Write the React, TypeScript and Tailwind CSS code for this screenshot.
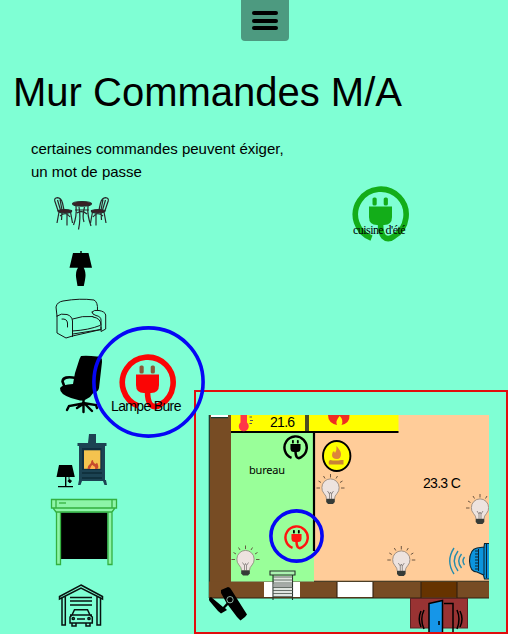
import React from "react";

const sans = "font-['Liberation_Sans',Arial,sans-serif]";

function Plug({ color, prong, className }: { color: string; prong: string; className: string }) {
  return (
    <svg viewBox="0 0 57 57" className={className} fill="none">
      <path d="M19.5 52.2A25.4 25.4 0 1 1 42 50.2Q36 55 31.5 50.5Q28.5 47 28.5 37" stroke={color} strokeWidth="5.6" />
      <path d="M17 20.5H40V31Q40 39 32 39H25Q17 39 17 31Z" fill={color} />
      <rect x="20.5" y="11.5" width="4.2" height="8" rx="1.6" fill={prong} />
      <rect x="31.7" y="11.5" width="4.2" height="8" rx="1.6" fill={prong} />
    </svg>
  );
}

function CafeChair() {
  return (
    <>
      <path d="M58.5 212L54.8 201Q54 198 57.5 197.7Q61 198 62.5 203L64 210M57.5 200L60.5 210M60 199.5L62 210" />
      <path d="M58 210.5Q65 208.5 71.5 210.5Q72.5 213 65 213Q58 213 58 210.5Z" fill="#3a1f25" />
      <path d="M59 212L57 223M62 213L61.5 220M67 213V225.5M70.5 212L72.5 223M60 216Q66 211 70 217" />
    </>
  );
}

function Dining() {
  return (
    <svg viewBox="40 185 80 60" className="h-[60px] w-[80px]" fill="none" stroke="#28282a" strokeWidth="1.2">
      <CafeChair />
      <g transform="translate(163 0) scale(-1 1)">
        <CafeChair />
      </g>
      <ellipse cx="82" cy="203.8" rx="9.5" ry="2.3" fill="#3a1f25" />
      <path d="M76 206Q77 216 73.5 225M79 207Q81 218 78.5 229.5M84.5 207Q82 217 84 222M88 206Q87 215 91 226M75 210H89M77 213Q82 210 87 214" />
    </svg>
  );
}

function TableLamp() {
  return (
    <svg viewBox="40 245 80 48" className="h-[48px] w-[80px]">
      <path d="M80.3 251H81.7V253H88.5L92 267.7H83.7L84.7 270Q86.200 274 85 280L83.8 286H77.5L76.5 280Q75.200 274 76.800 270L78 267.700H69.500L73 253H80.300Z" />
    </svg>
  );
}

function Sofa() {
  return (
    <svg viewBox="40 293 80 54" className="h-[54px] w-[80px]" fill="none" stroke="#151515" strokeWidth="1" strokeLinecap="round">
      <path d="M57 316L56 307Q57 302 63 301Q80 298 94 300Q98 302 97.5 310M57 316Q61 313 67 314.5Q72 316 72.5 321V336.5M57 316V333L66 338L72.5 336L101 329.5V327M72.5 319Q82 315.5 93 316.5M92 312Q94 309.5 99 310.5Q105 311.5 105.7 315V329L101 331.5V320Q101 316.5 96 315.5Q92 314.5 92 312M72.5 331Q89 330 100 325.5M93 317Q101 318 101 325M62 319Q67 318.5 67.5 323V327M73 334L101 329.5" />
    </svg>
  );
}

function OfficeChair() {
  return (
    <svg viewBox="40 347 80 75" className="h-[75px] w-[80px]">
      <path d="M81 356Q88 355.500 97 356.500Q102.500 356 102 362L99 388Q98 392.500 94 392L90 397L84 400.500H80L71 398Q59.500 394 60 388Q62 384.500 73 384L75 373L79.500 359Z" />
      <path d="M76 378Q63 375.500 62.500 381.500L65 388" fill="none" stroke="#000" strokeWidth="2.6" />
      <path d="M83.500 398V412M83 403.500L69 406L67 410M83 404L77 408M83 403L96 405L97 408M84 403L92 411" fill="none" stroke="#000" strokeWidth="2.4" strokeLinecap="round" />
    </svg>
  );
}

function Stove() {
  return (
    <svg viewBox="40 422 80 69" className="h-[69px] w-[80px]">
      <path d="M59 465H72L74.8 477H56.5ZM65 477H66.4V486H65ZM58 486H73V487.2H58Z" />
      <path d="M69 477V480M70 479.5L71.5 481L70 483L67.8 481Z" fill="#000" stroke="#000" strokeWidth=".8" />
      <path d="M89 434H96V443H106.5V446H105V480H106L107 485H104.5L103 481H82L80.5 485H78L79 480V446H77.5V443H88Z" fill="#1c4353" />
      <rect x="82" y="448" width="19.5" height="22" fill="#102f40" />
      <rect x="84" y="450.3" width="16.3" height="18.5" fill="#f4c34f" />
      <path d="M87.5 469Q88 465 91 463Q91 460 93 460Q93 463 96 464Q97 461 98 465Q99 468 97 469Z" fill="#c74b2c" />
      <path d="M90 469Q92 463 93.5 466Q96 467 95 469Z" fill="#ffb24c" />
      <path d="M82 473H102M82 478H102" stroke="#0c2c39" strokeWidth="1.3" />
    </svg>
  );
}

function Shutter() {
  return (
    <svg viewBox="40 491 80 84" className="h-[84px] w-[80px]" fill="none" stroke="#33b03f" strokeWidth="1.3">
      <rect x="61" y="512.5" width="46.5" height="46.500" fill="#000" stroke="none" />
      <path d="M51.5 499.5H116.5V508H51.5ZM53 508H115L112 512H56ZM56.5 512H60.5V564.5H56.5ZM108 512H112V564.5H108ZM56 499.5V508M112 499.5V508" fill="#8df5a8" />
      <path d="M59 503H66" />
    </svg>
  );
}

function Garage() {
  return (
    <svg viewBox="40 575 80 59" className="h-[59px] w-[80px]" fill="none" stroke="#07120f" strokeWidth="1.5">
      <path d="M81 585L102.5 596.5V599L81 588L59.5 599V596.5ZM62 598V625H65.3V596M100.5 598V625H97V596M70 597.5H92M70 601H92M70 605H92" />
      <path d="M72 615L74.5 609.8H87.5L90 615L92.3 617V623H70V617ZM70 615H92M72 623V626H76V623M86 623V626H90V623M77 619H85" />
      <circle cx="73.3" cy="618.5" r="1.1" /><circle cx="89" cy="618.5" r="1.1" />
    </svg>
  );
}

function Bulb({ x, y }: { x: number; y: number }) {
  return (
    <g transform={`translate(${x} ${y})`}>
      <path d="M0-10.5V-14M-5.5-9.5L-7-12M5.5-9.5L7-12M-9.5-5.5L-12-7M9.5-5.5L12-7M-10.5 0H-14M10.5 0H14" stroke="#5e4a38" strokeWidth=".9" />
      <path d="M-4 11Q-4 8-6.5 5.5Q-8.8 3-8.6-.5A8.6 8.6 0 0 1 8.6-.5Q8.8 3 6.5 5.5Q4 8 4 11Z" fill="#ede3df" stroke="#8d8179" strokeWidth=".8" />
      <path d="M-3 3L-1 6L0 4L1 6L3 3M-1 6V11M1 6V11" fill="none" stroke="#706a68" strokeWidth=".7" />
      <path d="M-4.3 11H4.3V14L2.5 16H-2.5L-4.3 14Z" fill="#363b37" />
    </g>
  );
}

function FloorDrawing() {
  return (
    <svg viewBox="208 415 281 217" className="block h-[217px] w-[281px]">
      <rect x="209" y="415" width="22" height="183" fill="#774c24" />
      <rect x="211" y="415" width="17" height="2.5" fill="#fff" />
      <path d="M209.3 415V598M211 417.7H228" stroke="#183d30" strokeWidth="1.2" />
      <rect x="231" y="415" width="83" height="166.5" fill="#9f9" />
      <rect x="314" y="415" width="175" height="166.5" fill="#fc9" />
      <rect x="231" y="415" width="167.5" height="17" fill="#ff0" />
      <path d="M231 432H398.5M314 432V551" stroke="#000" strokeWidth="2.2" />
      <path d="M307 415V431" stroke="#222" strokeWidth="3.6" />
      <path d="M307 415V431" stroke="#77772a" strokeWidth="1" />
      <rect x="209" y="581.5" width="280" height="16.5" fill="#774c24" />
      <rect x="264" y="582" width="36" height="15" fill="#fff" />
      <rect x="337" y="582" width="36" height="15" fill="#fff" />
      <rect x="421" y="582" width="36" height="15" fill="#630" />
      <path d="M314 581.3H489M209 598H489M337 582V598M373 582V598M421 582V598M457 582V598" stroke="#32200f" strokeWidth="1.1" fill="none" />

      <path d="M240.5 415V422.5A5 5 0 1 0 247 422.5V415Z" fill="#ff3848" />
      <path d="M249.5 417H252M250 420.5H253M249.5 423.5H252" stroke="#555" />
      <path d="M328 415H349.5Q350 423 341.5 425Q344 420 339.7 416Q335 421 337 425Q328 423 328 415Z" fill="#ef2c22" />

      <ellipse cx="336.7" cy="456" rx="13.7" ry="15" fill="#ff0" stroke="#000" strokeWidth="1.9" />
      <path d="M336.5 446Q341 451 341 454Q341 459 337 459Q332 459 332 455Q332 452 334 451L335 453Q337 450 336.5 446Z" fill="#dd853a" />
      <path d="M330 460Q336 461 341 460H343.5V464.5H329Q328 461 330 460Z" fill="#c98436" />

      <Bulb x={330.5} y={488} />
      <Bulb x={245.5} y={559.5} />
      <Bulb x={401.3} y={560} />
      <Bulb x={480} y={508} />

      <path d="M270 571H295V575H270ZM273 575V600M292.5 575V600" fill="#abf2b0" stroke="#26322a" strokeWidth="1.1" />
      <rect x="274" y="576" width="18" height="20" fill="#dfe4df" />
      <rect x="274" y="584" width="18" height="3" fill="#a6aaa7" />
      <path d="M273 577H293M273 580H293M273 583H293M273 587.5H293M273 590.5H293M273 593.5H293M273 596.5H293" stroke="#465049" strokeWidth=".8" />

      <path d="M221 590L228 587Q230 587 231.5 590L247 614.5L245 617L240.5 620.5L237 617L228 605L225 608L227 610L221 613.5L218 611L209.5 601Q208 598 211 597L223 607L226.5 603L221 593Z" />
      <circle cx="230" cy="599.7" r="3.2" fill="none" stroke="#acd9c8" strokeWidth=".8" />

      <path d="M454 548Q445.5 561 454 574M458 551Q450.5 561 458 571M461.5 554Q456 561 461.5 568M464.5 557Q461.5 561 464.5 565" fill="none" stroke="#238bad" strokeWidth="1.4" />
      <path d="M484.5 543.5H490V579H484.5L483.5 575L477 572Q470 572 469.5 561Q470 549 477 548L484 547Z" fill="#0c94dd" stroke="#0a2433" strokeWidth="1.1" />
      <path d="M478.5 549V571M484 547V575M486.5 544V578M475 551H478M475 554H478M475 557H478M475 560H478M475 563H478M475 566H478M475 569H478" stroke="#0a2433" strokeWidth="1" />

      <rect x="410.5" y="598.5" width="57" height="29.5" fill="#933" stroke="#5e2424" />
      <path d="M429 603.5L442.5 600.5V633H429Z" fill="#1696e8" stroke="#000" strokeWidth="1.5" />
      <path d="M444 603.5H453V632M439 621V625M424 610Q419.5 619 424 629M421 611Q417.5 619 421 627M457 610Q461 619 457 629M460 611Q464 619 460 627" fill="none" stroke="#000" strokeWidth="1.5" />
    </svg>
  );
}

function FloorPlan() {
  return (
    <section className="h-[244px] w-[314px] border-2 border-[#e10d0d] pl-3 pt-[23px]">
      <div className={`relative h-[217px] w-[281px] text-black ${sans}`}>
        <FloorDrawing />
        <span className="absolute left-[62px] top-0 text-[14px] leading-[14px] tracking-[-0.7px]">21.6</span>
        <span className="absolute left-[41px] top-[47px] font-['Noto_Sans',sans-serif] text-[11px] leading-[16px] tracking-[-0.2px]">bureau</span>
        <span className="absolute left-[215px] top-[60px] whitespace-nowrap text-[14px] leading-[16px] tracking-[-0.7px]">23.3 C</span>
        <Plug color="#000" prong="#000" className="absolute left-[75px] top-[20px] h-[25px] w-[25px]" />
        <Plug color="#ff1510" prong="#000" className="absolute left-[76px] top-[110px] h-[25px] w-[25px]" />
        <svg viewBox="0 0 55 54" className="absolute left-[61px] top-[94px] h-[54px] w-[55px]">
          <ellipse cx="27.5" cy="27" rx="25.600" ry="25.100" fill="none" stroke="#0606f5" strokeWidth="3.6" />
        </svg>
      </div>
    </section>
  );
}

export default function App() {
  return (
    <div className={`h-[634px] w-[508px] overflow-hidden bg-[#7fffd4] text-black ${sans}`}>
      <header className="flex h-[41px] justify-center pl-[22px]">
        <button aria-label="Menu" className="flex h-[41px] w-12 flex-col items-center justify-center gap-[3.5px] rounded-b-[4px] bg-[#4d9a80]">
          <i className="h-1 w-[26px] rounded-full bg-black" />
          <i className="h-1 w-[26px] rounded-full bg-black" />
          <i className="h-1 w-[26px] rounded-full bg-black" />
        </button>
      </header>
      <div className="h-[144px] pt-[28px]">
        <h1 className="pl-[13px] text-[40px] leading-[46px]">Mur Commandes M/A</h1>
        <p className="pl-[31px] pt-[22px] text-[15px] leading-[23px]">
          certaines commandes peuvent éxiger,
          <br />
          un mot de passe
        </p>
      </div>
      <main className="flex h-[449px]">
        <div className="relative flex w-[194px] shrink-0 flex-col pl-10">
          <Dining />
          <TableLamp />
          <Sofa />
          <OfficeChair />
          <Stove />
          <Shutter />
          <Garage />
          <div className="absolute left-[92px] top-[141px] z-10 h-[112px] w-[113px]">
            <svg viewBox="0 0 113 112" className="h-[112px] w-[113px]">
              <ellipse cx="56.5" cy="56" rx="54.6" ry="54.1" fill="none" stroke="#0606f5" strokeWidth="3.6" />
            </svg>
            <Plug color="#fb0505" prong="#8b5a38" className="absolute left-[27px] top-[28px] h-[57px] w-[57px]" />
            <span className="absolute left-[19px] top-[72px] whitespace-nowrap text-[14px] leading-[16px] tracking-[-0.65px]">Lampe Bure</span>
          </div>
        </div>
        <div className="flex w-[314px] flex-col justify-between">
          <div className="relative ml-[158px] mt-px h-[57px] w-[57px]">
            <Plug color="#13ad19" prong="#13ad19" className="h-[57px] w-[57px]" />
            <span className="absolute left-[1px] top-[37px] whitespace-nowrap font-['Liberation_Serif',serif] text-[12px] leading-[14px] tracking-[-0.55px]">cuisine d'été</span>
          </div>
          <FloorPlan />
        </div>
      </main>
    </div>
  );
}
